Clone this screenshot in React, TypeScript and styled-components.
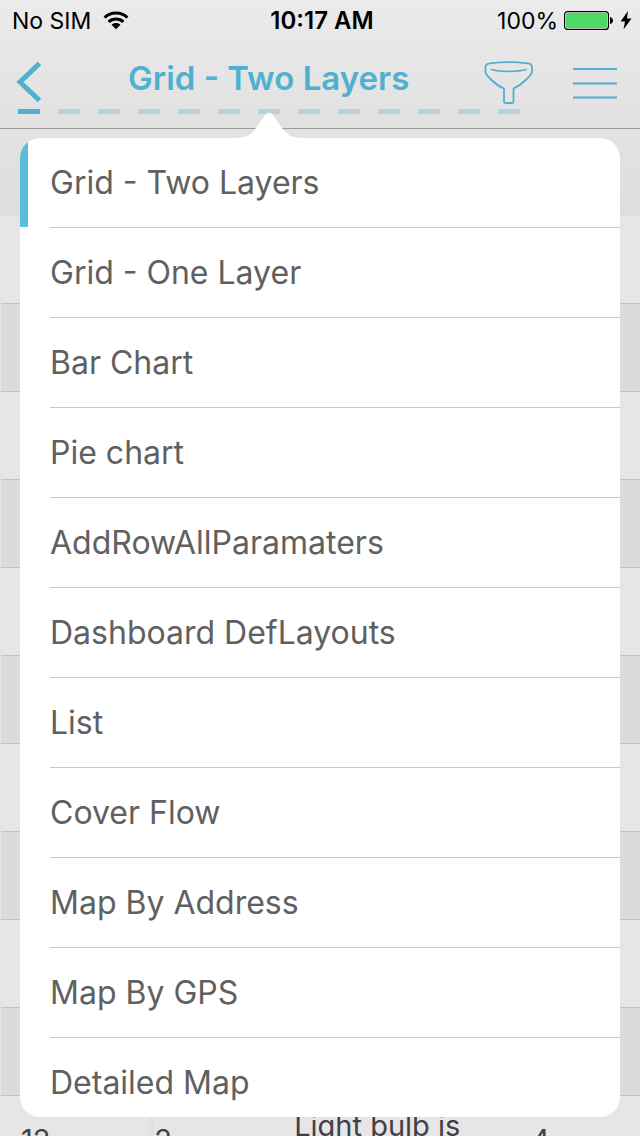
import React from "react";
import styled, { createGlobalStyle } from "styled-components";

const BLUE = "#50b0d0";

const Global = createGlobalStyle`
  *, *::before, *::after { box-sizing: border-box; }
  body { margin: 0; font-family: Inter, "Liberation Sans", sans-serif; background: #e5e5e5; }
  button { font: inherit; color: inherit; background: none; border: 0; padding: 0; cursor: pointer; }
`;

const Screen = styled.div`
  height: 100vh;
  overflow: hidden;
  display: flex;
  flex-direction: column;
  position: relative;
`;

const Header = styled.header`
  flex: none;
  background: linear-gradient(#ebebeb, #e1e1e1);
  border-bottom: 1px solid #9b9b9b;
`;

const StatusBar = styled.div`
  display: grid;
  grid-template-columns: 1fr auto 1fr;
  align-items: center;
  height: 40px;
  padding: 0 8px 0 12px;
  font-size: 23px;
  line-height: 42px;
  color: #000;
`;

const StatusGroup = styled.div<{ $end?: boolean }>`
  display: flex;
  align-items: center;
  justify-content: ${(p) => (p.$end ? "flex-end" : "flex-start")};
  gap: ${(p) => (p.$end ? 6 : 12)}px;
`;

const Clock = styled.time`
  font-size: 24px;
  font-weight: 600;
`;

const NavBar = styled.div`
  display: grid;
  grid-template-columns: 128px 1fr 200px;
  align-items: center;
  height: 69px;
  padding: 16px 23px 0 0;
  color: ${BLUE};
`;

const IconButton = styled.button`
  display: flex;
  align-items: center;
`;

const BackButton = styled(IconButton)`
  padding: 0 16px;
  justify-self: start;
`;

const Title = styled.h1`
  margin: 0;
  font-size: 33px;
  line-height: 40px;
  font-weight: 600;
  padding-bottom: 10px;
  white-space: nowrap;
`;

const Actions = styled.div`
  display: flex;
  justify-content: flex-end;
  align-items: center;
  gap: 40px;
`;

const Pager = styled.div`
  display: flex;
  gap: 18px;
  height: 19px;
  padding: 0 18px;
`;

const Dash = styled.span<{ $on: boolean }>`
  width: 22px;
  height: 5px;
  background: ${(p) => (p.$on ? BLUE : "#b4d3dc")};
`;

const GridHead = styled.div`
  flex: none;
  height: 87px;
  background: linear-gradient(#e2e2e2, #dedede);
`;

const Table = styled.table`
  width: 100%;
  border-collapse: separate;
  border-spacing: 0;
  table-layout: fixed;
  padding-left: 1px;
  color: #414048;
  font-size: 29px;
`;

const Row = styled.tr`
  height: 88px;
  background: #e6e6e6;
  &:nth-child(even) { background: #dbdbdb; }
`;

const Cell = styled.td<{ $kind: "key" | "number" | "text" }>`
  height: 88px;
  padding: ${(p) => ({ key: "0 0 0 20px", number: "0", text: "11px 0 0 12px" })[p.$kind]};
  border-bottom: 1px solid #c1c1c1;
  border-right: ${(p) => (p.$kind === "key" ? "6px solid #e1e1e1" : "0")};
  line-height: 38px;
  vertical-align: ${(p) => (p.$kind === "text" ? "top" : "middle")};
`;

const Popover = styled.nav`
  position: absolute;
  top: 138px;
  left: 20px;
  right: 20px;
`;

const Pointer = styled.svg`
  position: absolute;
  left: 214px;
  top: -26px;
`;

const Menu = styled.ul`
  list-style: none;
  margin: 0;
  padding: 0;
  height: 979px;
  overflow: hidden;
  background: #fff;
  border-radius: 20px;
`;

const MenuItem = styled.li<{ $active: boolean }>`
  height: 90px;
  padding-left: 30px;
  background: ${(p) =>
    p.$active ? "linear-gradient(#5abddc, #5abddc) no-repeat 0 0 / 8px 89px" : "none"};
`;

const MenuButton = styled.button`
  display: block;
  width: 100%;
  height: 90px;
  text-align: left;
  font-size: 32px;
  line-height: 88px;
  color: #606060;
  border-bottom: 1px solid #c6c6c6;
`;

const views = [
  "Grid - Two Layers", "Grid - One Layer", "Bar Chart", "Pie chart",
  "AddRowAllParamaters", "Dashboard DefLayouts", "List", "Cover Flow",
  "Map By Address", "Map By GPS", "Detailed Map",
];

const kinds = ["key", "number", "text", "number"] as const;

const rows: string[][] = [
  ...Array.from({ length: 10 }, () => ["", "", "", ""]),
  ["12", "2", "Light bulb is", "4"],
];

const WifiIcon = () => (
  <svg width="26" height="20" viewBox="0 0 26 20" aria-label="Wi-Fi">
    <g fill="none" stroke="#000" strokeWidth="3">
      <path d="M1.6 6.6C8 .6 18 .6 24.400 6.600" />
      <path d="M5.600 10.900C9.800 7 16.200 7 20.400 10.900" />
    </g>
    <path d="M13 18.300L8.500 13.700C11 11.500 15 11.500 17.500 13.700Z" />
  </svg>
);

const BatteryIcon = () => (
  <svg width="50" height="20" viewBox="0 0 50 20" aria-label="Charging">
    <rect x=".6" y=".6" width="43.800" height="17.800" rx="3" fill="#f4f4f4" stroke="#000" strokeWidth="1.200" />
    <rect x="2" y="2" width="41" height="15" rx="1.500" fill="#4cd964" />
    <path d="M46 6C50 7 50 12 46 13Z" />
  </svg>
);

const BoltIcon = () => (
  <svg width="12" height="20" viewBox="0 0 12 20">
    <path d="M8 0L.5 10.500H5L3.500 18.500L11.500 7.500H7Z" />
  </svg>
);

const BackIcon = () => (
  <svg width="26" height="42" viewBox="0 0 26 42" fill="none" stroke="currentColor" strokeWidth="5">
    <path d="M23.500 1.500L4 20L23.500 38.500" />
  </svg>
);

const FunnelIcon = () => (
  <svg width="50" height="44" viewBox="0 0 50 44" fill="none" stroke="currentColor" strokeWidth="1.800" strokeLinejoin="round" strokeLinecap="round">
    <path d="M2.500 6C2.500 3.500 4 2.800 7 2.400C18 1 34 1 45 2.400C48 2.800 49 3.500 49 6V11C49 13 40 23.500 30.500 27.500V40.500Q30.500 42 28.500 42H23Q21 42 21 40.500V27.500C11 23.500 2.500 13 2.500 11Z" />
    <path d="M8.500 8.500C16 11 35.500 11 43 8.500" />
  </svg>
);

const MenuIcon = () => (
  <svg width="44" height="32" viewBox="0 0 44 32" fill="none" stroke="currentColor" strokeWidth="2">
    <path d="M0 2H44M0 16.500H44M0 30.500H44" />
  </svg>
);

export default function App() {
  return (
    <>
      <Global />
      <Screen>
        <Header>
          <StatusBar>
            <StatusGroup><span>No SIM</span><WifiIcon /></StatusGroup>
            <Clock>10:17 AM</Clock>
            <StatusGroup $end><span>100%</span><BatteryIcon /><BoltIcon /></StatusGroup>
          </StatusBar>
          <NavBar>
            <BackButton aria-label="Back"><BackIcon /></BackButton>
            <Title>Grid - Two Layers</Title>
            <Actions>
              <IconButton aria-label="Filter"><FunnelIcon /></IconButton>
              <IconButton aria-label="Menu"><MenuIcon /></IconButton>
            </Actions>
          </NavBar>
          <Pager>
            {Array.from({ length: 13 }, (_, i) => <Dash key={i} $on={i === 0} />)}
          </Pager>
        </Header>
        <GridHead />
        <Table>
          <colgroup>
            <col width="24%" /><col width="20%" /><col width="39%" /><col width="17%" />
          </colgroup>
          <tbody>
            {rows.map((r, i) => (
              <Row key={i}>
                {r.map((c, j) => <Cell key={j} $kind={kinds[j]}>{c}</Cell>)}
              </Row>
            ))}
          </tbody>
        </Table>
        <Popover aria-label="Views">
          <Pointer width="70" height="27" viewBox="0 0 70 27">
            <path d="M0 27V26C12 26 17 23 22 16L29 6C33 -1 37 -1 41 6L48 16C53 23 58 26 70 26V27Z" fill="#fff" />
          </Pointer>
          <Menu>
            {views.map((v, i) => (
              <MenuItem key={v} $active={i === 0}><MenuButton>{v}</MenuButton></MenuItem>
            ))}
          </Menu>
        </Popover>
      </Screen>
    </>
  );
}
